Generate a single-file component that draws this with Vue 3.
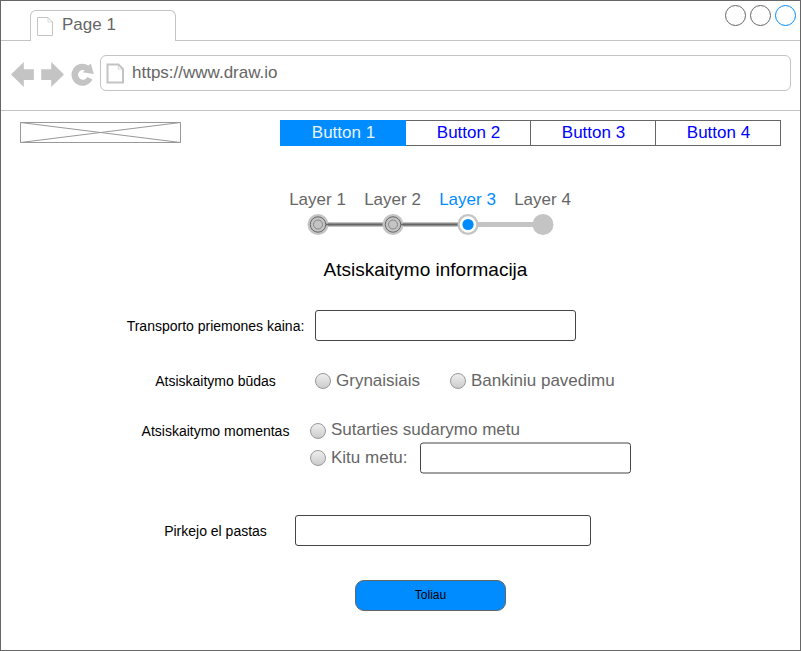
<script setup>
const controls = ['#666', '#666', '#008cff']
const tabs = ['Button 1', 'Button 2', 'Button 3', 'Button 4']
const steps = ['Layer 1', 'Layer 2', 'Layer 3', 'Layer 4']
const current = 2
const nodeX = (n) => 38 + n * 75
</script>

<template>
  <div class="window">
    <header class="tabbar">
      <div class="lead"></div>
      <div class="tab">
        <svg class="tab-icon" width="17" height="20" viewBox="0 0 17 20">
          <path d="M.5 .5H11L15.5 5V18.5H.5Z" fill="none" stroke="#c4c4c4" />
          <path d="M11 .5V5H15.5" fill="none" stroke="#c4c4c4" stroke-opacity=".6" />
        </svg>
        <span>Page 1</span>
      </div>
      <div class="controls">
        <i v-for="(c, n) in controls" :key="n" :style="{ borderColor: c }"></i>
      </div>
    </header>

    <div class="toolbar">
      <svg class="nav" width="84" height="28" viewBox="10 60 84 28">
        <g fill="#c4c4c4">
          <path d="M11 74.5L23.8 62V69.2H33.8V80H23.8V87Z" />
          <path d="M64 74.5L51.2 62V69.2H41.2V80H51.2V87Z" />
          <path d="M92.4 79.6A11 11 0 1 1 88.4 65.4L90.8 63.6L93.8 73.9L82.6 72.2L84.9 70.3A4.9 4.9 0 1 0 87.4 76.9Z" />
        </g>
      </svg>
      <div class="address">
        <svg width="19" height="22" viewBox="0 0 19 22">
          <path d="M1.5 1.5H12.5L17 6V19.5H1.5Z" fill="none" stroke="#c4c4c4" stroke-width="2" />
          <path d="M12.3 1.5V6.2H17" fill="none" stroke="#c4c4c4" stroke-opacity=".6" />
        </svg>
        <span>https://www.draw.io</span>
      </div>
    </div>

    <div class="topnav">
      <svg class="logo" width="161" height="21" viewBox="0 0 161 21">
        <path d="M.5 .5L160.5 20.5M.5 20.5L160.5 .5M.5 .5H160.5V20.5H.5Z" fill="none" stroke="#999" />
      </svg>
      <nav class="buttons">
        <a v-for="(t, n) in tabs" :key="t" :class="{ active: n === 0 }">{{ t }}</a>
      </nav>
    </div>

    <div class="steps">
      <div class="names">
        <span v-for="(s, n) in steps" :key="s" :class="{ current: n === current }">{{ s }}</span>
      </div>
      <svg width="300" height="22" viewBox="0 .5 300 22">
        <path d="M38 11H263" stroke="#c4c4c4" stroke-width="5" />
        <path d="M38 11H188" stroke="#999" stroke-width="3" />
        <path d="M38 11H188" stroke="#666" stroke-width="1.6" />
        <template v-for="(s, n) in steps" :key="s">
          <circle :cx="nodeX(n)" cy="11" r="10.5" fill="#c4c4c4" />
          <template v-if="n < current">
            <path :d="`M${nodeX(n) + 8} 11h4`" stroke="#666" stroke-width="1.6" />
            <circle :cx="nodeX(n)" cy="11" r="7.7" fill="none" stroke="#666" />
            <circle :cx="nodeX(n)" cy="11" r="4.5" fill="none" stroke="#777" stroke-width=".8" />
          </template>
          <template v-if="n === current">
            <circle :cx="nodeX(n)" cy="11" r="8.3" fill="#fff" />
            <circle :cx="nodeX(n)" cy="11" r="5.6" fill="#008cff" />
          </template>
        </template>
      </svg>
    </div>

    <h1>Atsiskaitymo informacija</h1>

    <main>
      <div class="row price">
        <label>Transporto priemones kaina:</label>
        <div class="field"></div>
      </div>
      <div class="row method">
        <label>Atsiskaitymo būdas</label>
        <div class="radio"><i></i>Grynaisiais</div>
        <div class="radio"><i></i>Bankiniu pavedimu</div>
      </div>
      <div class="row moment">
        <label>Atsiskaitymo momentas</label>
        <div class="options">
          <div class="radio"><i></i>Sutarties sudarymo metu</div>
          <div class="other">
            <div class="radio"><i></i>Kitu metu:</div>
            <svg width="211" height="32" viewBox="0 0 211 32">
              <rect x=".5" y="1" width="210" height="30" rx="2.5" fill="#fff" stroke="#444" />
            </svg>
          </div>
        </div>
      </div>
      <div class="row email">
        <label>Pirkejo el pastas</label>
        <div class="field"></div>
      </div>
    </main>

    <button>Toliau</button>
  </div>
</template>

<style>
body { margin: 0; background: #fff; }
</style>

<style scoped>
* { box-sizing: border-box; }
svg { display: block; flex: none; }
.window {
  width: 801px; height: 651px; border: 1px solid #666; background: #fff;
  display: flex; flex-direction: column; overflow: hidden;
  font-family: "Liberation Sans", Arial, sans-serif; font-size: 17px; line-height: 20px; color: #666;
}
.tabbar { display: flex; height: 40px; flex: none; }
.lead { width: 29px; border-bottom: 1px solid #c4c4c4; }
.tab {
  width: 146px; margin-top: 9px; border: 1px solid #c4c4c4; border-bottom: 0;
  border-radius: 6px 6px 0 0; display: flex; padding: 4px 0 0 6px; gap: 8px;
}
.tab-icon { margin-top: 2px; }
.controls {
  flex: 1; border-bottom: 1px solid #c4c4c4; display: flex; justify-content: flex-end;
  gap: 4px; padding: 4px 4px 0 0;
}
.controls i { width: 21px; height: 21px; border: 1px solid; border-radius: 50%; }
.toolbar {
  height: 70px; flex: none; border-bottom: 1px solid #c4c4c4;
  display: flex; padding: 14px 9px 0; gap: 6px;
}
.nav { margin-top: 5px; }
.address {
  flex: 1; height: 36px; border: 1px solid #c4c4c4; border-radius: 6px;
  display: flex; align-items: center; padding-left: 5px; gap: 7px;
}
.address svg { margin-top: 2px; }
.address span { margin-top: -1px; }
.topnav { display: flex; justify-content: space-between; padding: 9px 19px 0; height: 78px; flex: none; }
.logo { margin-top: 2px; }
.buttons { display: flex; width: 501px; height: 26px; border: 1px solid #666; border-left: 0; }
.buttons a {
  width: 125px; flex: none; color: #00f; text-align: center; line-height: 24px; border-right: 1px solid #666;
  padding-left: 1px;
}
.buttons a.active {
  width: 126px; height: 26px; margin: -1px 0; line-height: 26px; background: #008cff;
  color: #e6f3ff; border-right: 0; padding-left: 1px;
}
.buttons a:last-child { width: 124px; border-right: 0; }
.steps { padding: 1px 0 0 279px; flex: none; height: 70px; }
.names { display: flex; height: 24px; }
.names span { width: 75px; text-align: center; }
.names .current { color: #008cff; }
h1 {
  margin: 0; height: 51px; flex: none; text-align: center; font-size: 19px; font-weight: 400;
  color: #000; line-height: 22px; padding-left: 50px;
}
main { flex: none; height: 270px; }
.row { display: flex; }
label { width: 179px; text-align: center; font-size: 14px; color: #000; flex: none; }
.field { flex: none; height: 31px; border: 1px solid #444; border-radius: 3px; }
.price { height: 60px; padding-left: 125px; gap: 10px; }
.price label { padding-top: 6px; }
.price .field { width: 261px; }
.method { height: 50px; padding-left: 125px; }
.method label { padding-top: 1px; margin-right: 10px; }
.method .radio { width: 135px; }
.radio { display: flex; align-items: center; gap: 5px; white-space: nowrap; height: 20px; }
.radio i {
  flex: none; width: 16px; height: 16px; border: 1px solid #999; border-radius: 50%;
  background: linear-gradient(#eee, #ccc); margin-top: 1px;
}
.method .radio { height: 22px; }
.method .radio i { margin-top: 0; }
.moment { height: 95px; padding-left: 125px; gap: 5px; }
.moment label { padding-top: 1px; }
.other { display: flex; gap: 12px; margin-top: 2px; }
.other .radio { height: 32px; }
.other .radio i { margin-top: 0; }
.email { padding-left: 125px; }
.email label { padding-top: 6px; margin-right: -10px; }
.email .field { width: 296px; }
button {
  width: 151px; height: 31px; margin: 0 0 0 354px; padding: 0 0 2px; border: 1px solid #666; border-radius: 9px;
  background: #008cff; color: #000; font: 12px "Liberation Sans", sans-serif;
}
</style>
